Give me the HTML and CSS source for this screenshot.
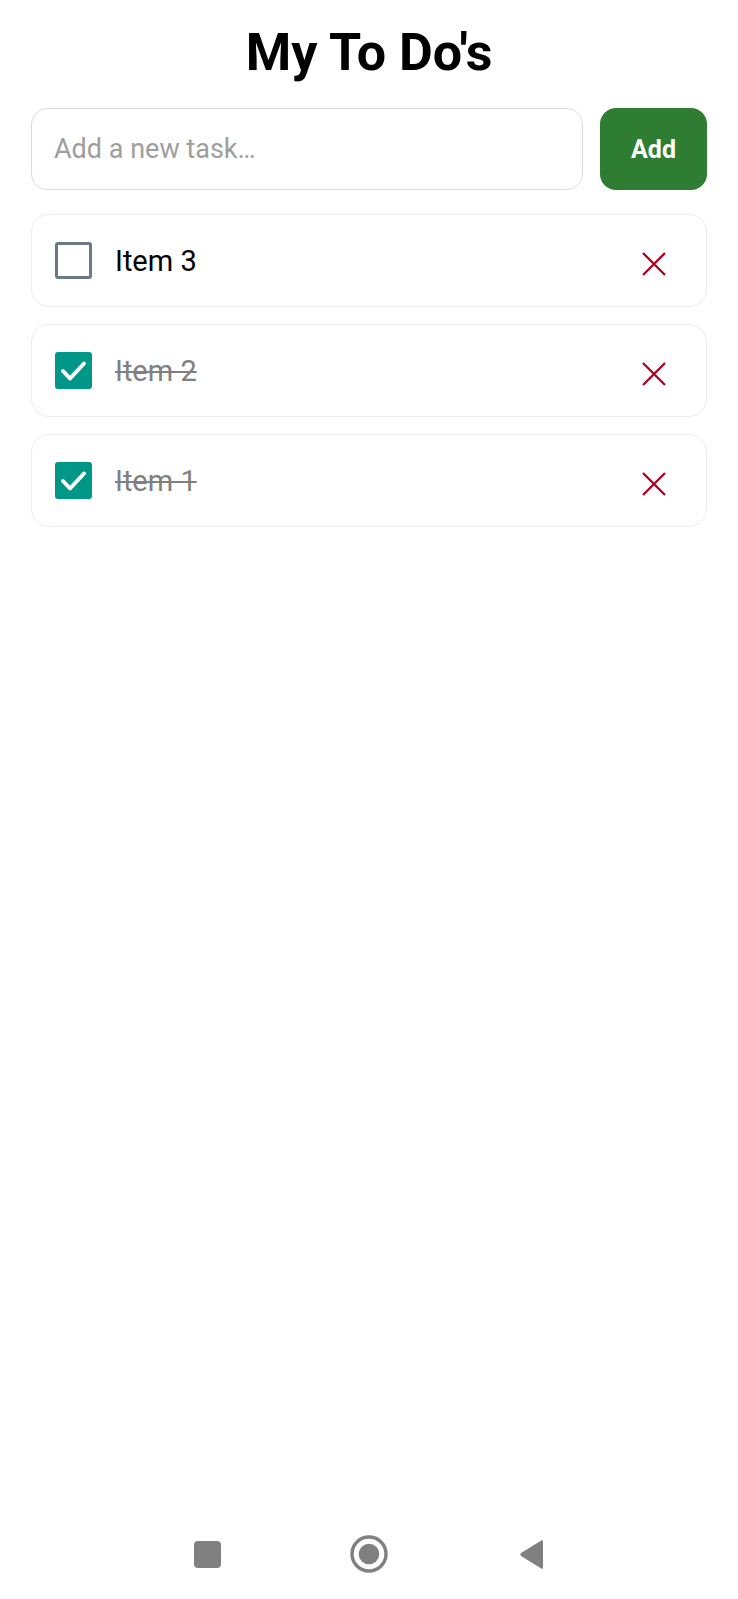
FILE: index.html
```html
<!DOCTYPE html>
<html>
<head>
<meta charset="utf-8">
<link rel="stylesheet" href="styles.css">
</head>
<body>
<div class="screen">
  <main class="app">
    <h1 class="title">My To Do's</h1>
    <div class="add-row">
      <div class="task-input">Add a new task…</div>
      <button class="add-btn">Add</button>
    </div>
    <ul class="list">
      <li class="card">
        <span class="box"></span>
        <span class="label">Item 3</span>
        <svg class="del" viewBox="0 0 24 24"><path d="M1 1 L23 23 M23 1 L1 23"/></svg>
      </li>
      <li class="card done">
        <span class="box checked"><svg viewBox="0 0 37 37"><path d="M8 19 L15 26.5 L29 11.5"/></svg></span>
        <span class="label">Item 2</span>
        <svg class="del" viewBox="0 0 24 24"><path d="M1 1 L23 23 M23 1 L1 23"/></svg>
      </li>
      <li class="card done">
        <span class="box checked"><svg viewBox="0 0 37 37"><path d="M8 19 L15 26.5 L29 11.5"/></svg></span>
        <span class="label">Item 1</span>
        <svg class="del" viewBox="0 0 24 24"><path d="M1 1 L23 23 M23 1 L1 23"/></svg>
      </li>
    </ul>
  </main>
  <nav class="navbar">
    <div class="slot"><span class="nav-square"></span></div>
    <div class="slot"><svg class="nav-home" viewBox="0 0 38 38"><circle cx="19" cy="19" r="17" fill="none" stroke="#808080" stroke-width="3.4"/><circle cx="19" cy="19" r="10.3" fill="#808080"/></svg></div>
    <div class="slot"><svg class="nav-back" viewBox="0 0 26 31"><path d="M24 2.5 L24 28.5 Q24 30.5 22.3 29.5 L2 17 Q0.5 15.5 2 14 L22.3 1.5 Q24 0.5 24 2.5 Z" fill="#808080"/></svg></div>
  </nav>
</div>
</body>
</html>
```

FILE: styles.css
```css
* { box-sizing: border-box; }
html, body { margin: 0; padding: 0; background: #fff; }
body { font-family: Roboto, "Noto Sans", sans-serif; color: #000; }

.screen {
  min-height: 100vh;
  display: flex;
  flex-direction: column;
}

.app {
  flex: 1;
  padding: 0 31px;
}

.title {
  margin: 0 0 24px;
  padding-top: 22px;
  font-size: 52px;
  line-height: 62px;
  font-weight: 700;
  text-align: center;
}

.add-row {
  display: flex;
  gap: 17px;
  height: 82px;
}

.task-input {
  flex: 1;
  display: flex;
  align-items: center;
  border: 1.5px solid #dcdcdc;
  border-radius: 16px;
  padding-left: 22px;
  font-size: 27px;
  color: #9e9e9e;
}

.add-btn {
  width: 107px;
  border: none;
  border-radius: 16px;
  background: #2e7d32;
  color: #fff;
  font-family: Roboto, sans-serif;
  font-weight: 700;
  font-size: 25px;
  padding: 0;
}

.list {
  list-style: none;
  margin: 24px 0 0;
  padding: 0;
  display: flex;
  flex-direction: column;
  gap: 17px;
}

.card {
  height: 93px;
  display: flex;
  align-items: center;
  border: 1.5px solid #ececec;
  border-radius: 18px;
  padding: 0 40px 0 23px;
}

.box {
  width: 37px;
  height: 37px;
  flex: none;
  border: 3px solid #6b7886;
  border-radius: 3px;
  display: flex;
  align-items: center;
  justify-content: center;
}

.box.checked {
  border: none;
  background: #009688;
}

.box.checked svg {
  width: 37px;
  height: 37px;
}

.box.checked path {
  fill: none;
  stroke: #fff;
  stroke-width: 4;
  stroke-linecap: round;
  stroke-linejoin: round;
}

.label {
  flex: 1;
  margin-left: 23px;
  font-size: 29px;
  margin-top: 1px;
}

.done .label {
  color: #808080;
  text-decoration: line-through;
}

.del {
  width: 24px;
  height: 24px;
  flex: none;
  margin-top: 6px;
}

.del path {
  fill: none;
  stroke: #b00020;
  stroke-width: 2.3;
}

.navbar {
  height: 90px;
  display: flex;
  justify-content: center;
  align-items: center;
}

.slot {
  width: 162px;
  display: flex;
  justify-content: center;
  align-items: center;
}

.nav-square {
  width: 27px;
  height: 27px;
  border-radius: 4px;
  background: #808080;
}

.nav-home {
  width: 38px;
  height: 38px;
}

.nav-back {
  width: 26px;
  height: 31px;
  margin-left: 2px;
}
```
